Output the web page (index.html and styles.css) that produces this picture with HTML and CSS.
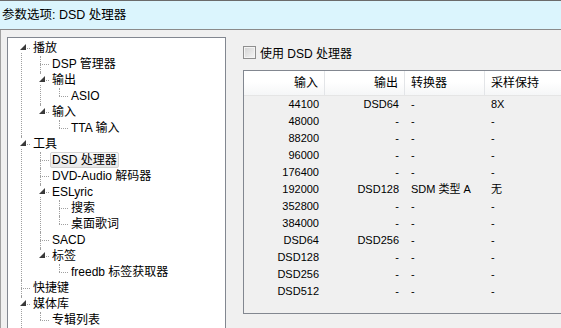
FILE: index.html
```html
<!DOCTYPE html>
<html lang="zh-CN">

<head>
    <meta charset="UTF-8">
    <meta name="viewport" content="width=device-width, initial-scale=1.0">
    <title>参数选项: DSD 处理器</title>
    <link rel="stylesheet" href="styles.css">
</head>

<body>

    <!-- Barra de título -->
    <div class="titlebar">参数选项: DSD 处理器</div>

    <div class="window">
        <!-- Árvore de páginas -->
        <div class="treebox">
            <ul class="tree">
                <li>
                    <div class="node"><span class="twist"></span><span class="label">播放</span></div>
                    <ul>
                        <li><div class="node"><span class="label">DSP 管理器</span></div></li>
                        <li>
                            <div class="node"><span class="twist"></span><span class="label">输出</span></div>
                            <ul>
                                <li><div class="node"><span class="label">ASIO</span></div></li>
                            </ul>
                        </li>
                        <li>
                            <div class="node"><span class="twist"></span><span class="label">输入</span></div>
                            <ul>
                                <li><div class="node"><span class="label">TTA 输入</span></div></li>
                            </ul>
                        </li>
                    </ul>
                </li>
                <li>
                    <div class="node"><span class="twist"></span><span class="label">工具</span></div>
                    <ul>
                        <li><div class="node"><span class="label selected">DSD 处理器</span></div></li>
                        <li><div class="node"><span class="label">DVD-Audio 解码器</span></div></li>
                        <li>
                            <div class="node"><span class="twist"></span><span class="label">ESLyric</span></div>
                            <ul>
                                <li><div class="node"><span class="label">搜索</span></div></li>
                                <li><div class="node"><span class="label">桌面歌词</span></div></li>
                            </ul>
                        </li>
                        <li><div class="node"><span class="label">SACD</span></div></li>
                        <li>
                            <div class="node"><span class="twist"></span><span class="label">标签</span></div>
                            <ul>
                                <li><div class="node"><span class="label">freedb 标签获取器</span></div></li>
                            </ul>
                        </li>
                    </ul>
                </li>
                <li><div class="node"><span class="label">快捷键</span></div></li>
                <li>
                    <div class="node"><span class="twist"></span><span class="label">媒体库</span></div>
                    <ul>
                        <li><div class="node"><span class="label">专辑列表</span></div></li>
                    </ul>
                </li>
                <li><div class="node"><span class="label">高级</span></div></li>
            </ul>
        </div>

        <!-- Página DSD -->
        <div class="page">
            <label class="check"><span class="box"></span>使用 DSD 处理器</label>

            <div class="list">
                <div class="row head">
                    <div class="cell right">输入</div>
                    <div class="cell right">输出</div>
                    <div class="cell">转换器</div>
                    <div class="cell">采样保持</div>
                </div>
                <div class="row"><div class="cell right">44100</div><div class="cell right">DSD64</div><div class="cell">-</div><div class="cell">8X</div></div>
                <div class="row"><div class="cell right">48000</div><div class="cell right">-</div><div class="cell">-</div><div class="cell">-</div></div>
                <div class="row"><div class="cell right">88200</div><div class="cell right">-</div><div class="cell">-</div><div class="cell">-</div></div>
                <div class="row"><div class="cell right">96000</div><div class="cell right">-</div><div class="cell">-</div><div class="cell">-</div></div>
                <div class="row"><div class="cell right">176400</div><div class="cell right">-</div><div class="cell">-</div><div class="cell">-</div></div>
                <div class="row"><div class="cell right">192000</div><div class="cell right">DSD128</div><div class="cell">SDM 类型 A</div><div class="cell">无</div></div>
                <div class="row"><div class="cell right">352800</div><div class="cell right">-</div><div class="cell">-</div><div class="cell">-</div></div>
                <div class="row"><div class="cell right">384000</div><div class="cell right">-</div><div class="cell">-</div><div class="cell">-</div></div>
                <div class="row"><div class="cell right">DSD64</div><div class="cell right">DSD256</div><div class="cell">-</div><div class="cell">-</div></div>
                <div class="row"><div class="cell right">DSD128</div><div class="cell right">-</div><div class="cell">-</div><div class="cell">-</div></div>
                <div class="row"><div class="cell right">DSD256</div><div class="cell right">-</div><div class="cell">-</div><div class="cell">-</div></div>
                <div class="row"><div class="cell right">DSD512</div><div class="cell right">-</div><div class="cell">-</div><div class="cell">-</div></div>
            </div>
        </div>
    </div>

</body>

</html>
```

FILE: styles.css
```css
/* Estilos gerais */
body {
    font-family: "Liberation Sans", "Noto Sans CJK SC", sans-serif;
    font-size: 12px;
    color: #000;
    background-color: #f0f0f0;
    margin: 0;
    height: 328px;
    overflow: hidden;
}

/* Barra de título */
.titlebar {
    height: 28px;
    line-height: 28px;
    padding-left: 2px;
    font-size: 12.5px;
    background-color: #dbf5fd;
    border-top: 1px solid #6b6b6b;
    border-bottom: 1px solid #8a8a8a;
}

.window {
    display: flex;
    align-items: flex-start;
    padding: 7px 0 0 6px;
    border-left: 1px solid #a0a0a0;
    height: 291px;
    overflow: hidden;
}

/* Árvore */
.treebox {
    flex: none;
    width: 219px;
    height: 310px;
    box-sizing: border-box;
    padding-top: 2px;
    background-color: #fff;
    border: 1px solid #828790;
    overflow: hidden;
}

.tree, .tree ul {
    list-style: none;
    margin: 0;
    padding: 0;
}

.tree ul {
    padding-left: 19px;
}

.tree li {
    position: relative;
}

/* linha vertical entre irmãos */
.tree li::before {
    content: "";
    position: absolute;
    left: 13px;
    top: 0;
    bottom: 0;
    border-left: 1px dotted #a0a0a0;
}

.tree li:last-child::before {
    bottom: auto;
    height: 8px;
}

.tree > li:first-child::before {
    top: 8px;
}

.node {
    position: relative;
    display: flex;
    align-items: center;
    height: 16px;
    padding-left: 23px;
    white-space: nowrap;
}

/* linha horizontal até o rótulo */
.node::before {
    content: "";
    position: absolute;
    left: 13px;
    top: 8px;
    width: 9px;
    border-top: 1px dotted #a0a0a0;
}

.twist {
    position: absolute;
    left: 9px;
    top: 3px;
    width: 9px;
    height: 9px;
    background-color: #fff;
    z-index: 1;
}

.twist::after {
    content: "";
    position: absolute;
    right: 0;
    top: 1px;
    border-left: 6px solid transparent;
    border-bottom: 6px solid #3a3a3a;
}

.label {
    position: relative;
    line-height: 14px;
    padding: 0 1px;
    border: 1px solid transparent;
    border-radius: 2px;
}

.label.selected {
    border-color: #d4d4d4;
    background: linear-gradient(#fafafa, #e8e8e8);
}

/* Página de opções */
.page {
    flex: 1;
    min-width: 0;
    margin-left: 17px;
    padding-top: 9px;
    overflow: hidden;
}

.check {
    display: flex;
    align-items: center;
    height: 13px;
    margin-bottom: 11px;
    white-space: nowrap;
}

.check .box {
    width: 11px;
    height: 11px;
    margin-right: 4px;
    border: 1px solid #8f8f8f;
    background: linear-gradient(135deg, #d2d2d2, #f6f6f6);
    box-shadow: inset 0 0 0 1px #f4f4f4;
}

/* Lista */
.list {
    width: 360px;
    height: 244px;
    box-sizing: border-box;
    border: 1px solid #828790;
    font-size: 11px;
}

.row {
    display: grid;
    grid-template-columns: 81px 80px 80px 1fr;
    height: 17px;
    line-height: 17px;
    white-space: nowrap;
}

.cell {
    padding: 0 6px;
    overflow: hidden;
}

.cell.right {
    text-align: right;
}

.row.head {
    height: 24px;
    line-height: 24px;
    font-size: 12px;
    background: linear-gradient(#ffffff 45%, #f5f6f7);
    border-bottom: 1px solid #e5e5e5;
}

.row.head .cell {
    border-right: 1px solid #e3e5e8;
}

.row.head .cell:last-child {
    border-right: none;
}
```
